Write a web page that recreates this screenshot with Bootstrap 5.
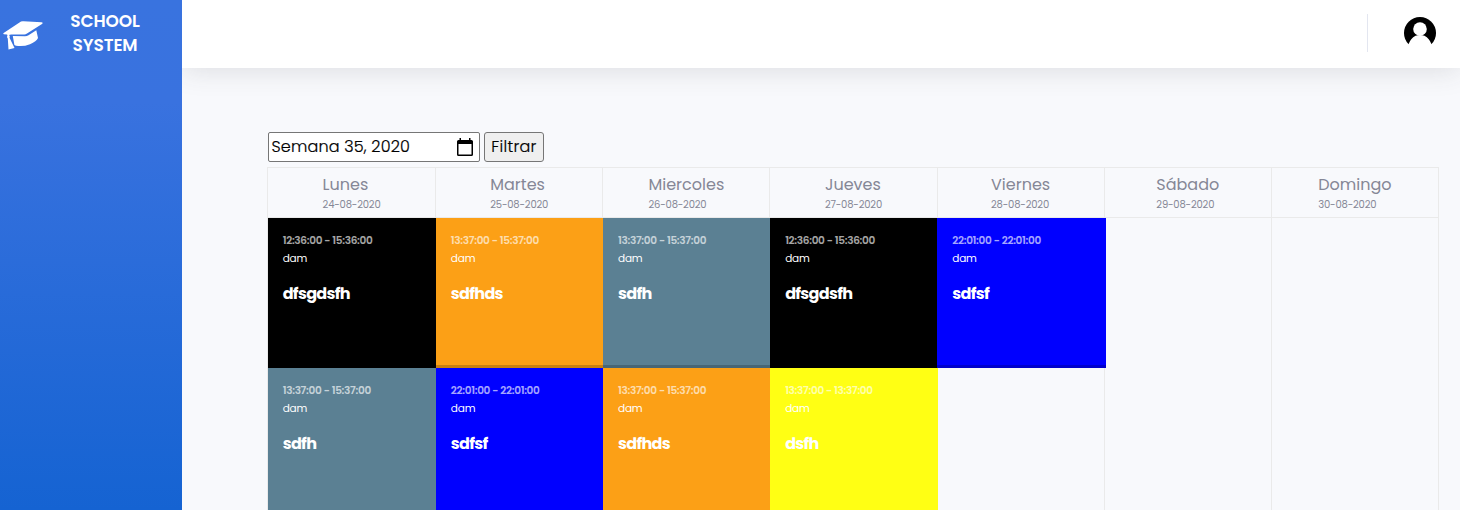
<!DOCTYPE html>
<html lang="es">
<head>
<meta charset="utf-8">
<title>School System</title>
<link href="https://cdn.jsdelivr.net/npm/bootstrap@5.3.0/dist/css/bootstrap.min.css" rel="stylesheet">
<style>
body{font-family:Poppins,Inter,"Open Sans",sans-serif;background:#f8f9fc;color:#858796;height:510px;overflow:hidden}
.side{width:182px;position:relative;z-index:2;background:linear-gradient(180deg,#3973df 0,#3972df 20%,#1563d2 100%)}
.brand-link{height:68px;padding:0 0 3px 3px;color:#fff}
.brand-link svg{margin-top:5px}
.brand-name{width:124px;font-weight:600;font-size:17px;line-height:24px;letter-spacing:-.1px}
.topbar{height:68px;box-shadow:0 2px 28px rgba(58,59,69,.15);padding-right:24px}
.topbar svg{margin-top:-3px}
.rule{width:1px;height:38px;margin-top:-2px;background:#e3e6f0;margin-right:36px}
.content-area{padding:64px 21px 0 85px}
.filters{margin-left:1px;height:30px;color:#000;font-size:16px}
.week-input{width:212px;height:30px;background:#fff;border:1px solid #767676;border-radius:2px;padding:0 6px 0 2.500px}
.week-input span{font-weight:300;letter-spacing:.17px;-webkit-text-stroke:.2px #000}
.btn-filter{height:30px;width:60px;border:1px solid #767676;border-radius:3px;background:#efefef;padding:0;color:#000;font-size:16px;font-weight:300;-webkit-text-stroke:.2px #000;line-height:26px;letter-spacing:.3px}
.schedule{display:grid;grid-template-columns:repeat(7,minmax(0,1fr));margin-top:5px;height:343px;overflow:hidden;border:1px solid #eaeaea;border-bottom:0}
.day+.day{border-left:1px solid #eaeaea}
.day-head{height:50px;border-bottom:1px solid #eaeaea;padding-top:5px}
.day-name{font-size:16px;line-height:24px}
.day-date{font-size:10px;line-height:15px;letter-spacing:-.18px}
.event{height:150px;margin-right:-1.8px;margin-left:-.3px;padding:15px 15px 0;color:#fff;box-shadow:inset 0 -3px rgba(0,0,0,.2);position:relative}
.hours{font-size:10.5px;line-height:16px;font-weight:600;letter-spacing:-.31px;opacity:.65}
.group{font-size:10.5px;line-height:20px;letter-spacing:-.2px}
.subject{font-size:16px;line-height:24px;font-weight:700;margin-top:13px;letter-spacing:-.7px}
.e-black{background:#000}.e-orange{background:#fca016}.e-teal{background:#5b8093}.e-blue{background:#00f}.e-yellow{background:#ffff14}
</style>
</head>
<body class="d-flex">
<aside class="side flex-shrink-0">
  <a class="brand-link d-flex align-items-center text-decoration-none" href="#">
    <svg width="40" height="29" viewBox="0 0 40 29" fill="#fff"><path d="M18 .5Q19 0 20.500 .2L38.500 1.300Q40.500 1.800 39 3L24 12.500Q22.500 13.700 21 13.600L8 13.400 6 14Q7.300 15 6.500 16.700L11.500 27 5.500 28.500 4.800 17.500Q3.500 16 4.500 14.200L4 13.500.8 13.200Q-.5 12.500 1 11.700Z"/><path d="M9.800 15 22 15.300Q24 15.200 25.500 14.200L33.300 9.200 35 17Q33.500 20.500 27 23.200Q20 26 13 24.700L11.400 24Z"/></svg>
    <span class="brand-name text-center">SCHOOL<br>SYSTEM</span>
  </a>
</aside>
<div class="flex-grow-1">
  <nav class="topbar bg-white d-flex align-items-center justify-content-end">
    <div class="rule"></div>
    <svg width="32" height="32" viewBox="0 0 32 32"><circle cx="16" cy="16" r="16"/><path fill="#fff" d="M4.600 27Q6.500 21.500 11.500 18.700 16 17.500 20.500 18.700 25.500 21.500 27.400 27L32 32H0Z"/><circle cx="16" cy="12" r="6.800" fill="#fff"/></svg>
  </nav>
  <main class="content-area">
    <div class="filters d-flex gap-1">
      <div class="week-input d-flex align-items-center justify-content-between"><span>Semana 35, 2020</span>
        <svg width="16" height="18" viewBox="0 0 16 18"><path fill-rule="evenodd" d="M2.500 0H4V2H12V0H13.500V2H14.500Q16 2 16 3.500V16.500Q16 18 14.500 18H1.500Q0 18 0 16.500V3.500Q0 2 1.500 2H2.500ZM1.500 6V16.500H14.500V6Z"/></svg>
      </div>
      <button class="btn-filter">Filtrar</button>
    </div>
    <div class="schedule" id="schedule"></div>
  </main>
</div>
<script>
const days=[
 ["Lunes","24-08-2020",[["black","12:36:00 - 15:36:00","dfsgdsfh"],["teal","13:37:00 - 15:37:00","sdfh"]]],
 ["Martes","25-08-2020",[["orange","13:37:00 - 15:37:00","sdfhds"],["blue","22:01:00 - 22:01:00","sdfsf"]]],
 ["Miercoles","26-08-2020",[["teal","13:37:00 - 15:37:00","sdfh"],["orange","13:37:00 - 15:37:00","sdfhds"]]],
 ["Jueves","27-08-2020",[["black","12:36:00 - 15:36:00","dfsgdsfh"],["yellow","13:37:00 - 13:37:00","dsfh"]]],
 ["Viernes","28-08-2020",[["blue","22:01:00 - 22:01:00","sdfsf"]]],
 ["Sábado","29-08-2020",[]],
 ["Domingo","30-08-2020",[]]];
document.getElementById("schedule").innerHTML=days.map(([n,d,ev])=>
 `<section class="day"><div class="day-head d-flex justify-content-center"><div><div class="day-name">${n}</div><div class="day-date">${d}</div></div></div>`+
 ev.map(([c,h,s])=>`<article class="event e-${c}"><div class="hours">${h}</div><div class="group">dam</div><div class="subject">${s}</div></article>`).join("")+`</section>`).join("");
</script>
<script src="https://cdn.jsdelivr.net/npm/bootstrap@5.3.0/dist/js/bootstrap.bundle.min.js"></script>
</body>
</html>
